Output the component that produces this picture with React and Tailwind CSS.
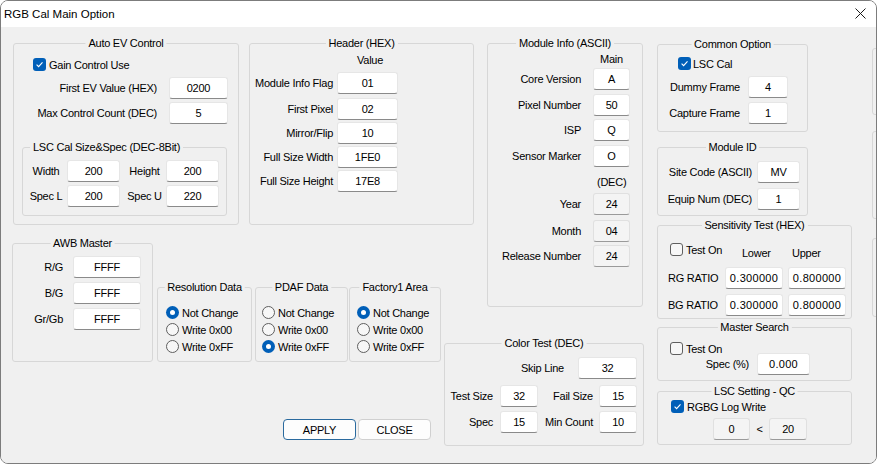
import React from "react"

const Check = ({ checked }) =>
  checked ? (
    <span className="flex h-[13px] w-[13px] shrink-0 items-center justify-center rounded-[3px] bg-[#005fb8]">
      <svg width="9" height="9" viewBox="0 0 9 9">
        <path d="M1.6 4.7 L3.6 6.7 L7.5 2.3" fill="none" stroke="#fff" strokeWidth="1.1" />
      </svg>
    </span>
  ) : (
    <span className="block h-[13px] w-[13px] shrink-0 rounded-[3px] border border-[#5f5f5f] bg-[#f7f7f7]" />
  )

const Radio = ({ checked }) =>
  checked ? (
    <span className="flex h-[13px] w-[13px] shrink-0 items-center justify-center rounded-full bg-[#005fb8]">
      <span className="block h-[5px] w-[5px] rounded-full bg-white" />
    </span>
  ) : (
    <span className="block h-[13px] w-[13px] shrink-0 rounded-full border border-[#5f5f5f] bg-[#f7f7f7]" />
  )

const Edit = ({ value, ro, className = "" }) => (
  <div
    className={`flex h-[22px] shrink-0 items-center justify-center rounded-[3px] border ${
      ro ? "border-[#e0e0e0] border-b-[#9a9a9a] bg-[#f4f4f4]" : "border-[#e6e6e6] border-b-[#8a8a8a] bg-white"
    } ${className}`}
  >
    {value}
  </div>
)

const Group = ({ title, left, className = "", children }) => (
  <div className={`relative shrink-0 rounded-[3px] border border-[#d7d7d7] ${className}`}>
    <span
      className={`absolute top-[-8px] whitespace-nowrap bg-[#f0f0f0] px-[3px] leading-[14px] ${
        left ? "left-[7px]" : "left-1/2 -translate-x-1/2"
      }`}
    >
      {title}
    </span>
    {children}
  </div>
)

const Row = ({ className = "", children }) => (
  <div className={`flex h-[22px] items-center ${className}`}>{children}</div>
)

const RadioGroup = ({ title, sel, className = "", pad }) => (
  <Group title={title} className={className}>
    <div className={`flex flex-col pt-[16px] ${pad}`}>
      {["Not Change", "Write 0x00", "Write 0xFF"].map((t, i) => (
        <div key={t} className="flex h-[17px] items-center gap-[3px]">
          <Radio checked={sel === i} />
          <span>{t}</span>
        </div>
      ))}
    </div>
  </Group>
)

export default function App() {
  const header = [
    ["Module Info Flag", "01", "mt-[5px]"],
    ["First Pixel", "02", "mt-[4px]"],
    ["Mirror/Flip", "10", "mt-[2px]"],
    ["Full Size Width", "1FE0", "mt-[2px]"],
    ["Full Size Height", "17E8", "mt-[2px]"],
  ]
  const ascii = [
    ["Core Version", "A", "mt-[2px]"],
    ["Pixel Number", "50", "mt-[4px]"],
    ["ISP", "Q", "mt-[3px]"],
    ["Sensor Marker", "O", "mt-[4px]"],
  ]
  const dec = [
    ["Year", "24", "mt-[4px]"],
    ["Month", "04", "mt-[5px]"],
    ["Release Number", "24", "mt-[3px]"],
  ]
  const awb = [
    ["R/G", "pt-0"],
    ["B/G", "mt-[4px]"],
    ["Gr/Gb", "mt-[4px]"],
  ]

  return (
    <div className="h-[464px] w-[877px] bg-white font-['Liberation_Sans',Arial,sans-serif] text-[11px] leading-[14px] tracking-[-0.25px] text-black">
      <div className="flex h-full w-full flex-col overflow-hidden rounded-[8px] border border-[#7c7c7c]">
        {/* title bar */}
        <div className="flex h-[26px] shrink-0 items-center bg-white pb-[1px] pl-[3px]">
          <span className="text-[11.5px] tracking-normal">RGB Cal Main Option</span>
          <svg className="ml-auto mr-[10px]" width="11" height="11" viewBox="0 0 11 11">
            <path d="M0.5 0.5 L10.5 10.5 M10.5 0.5 L0.5 10.5" stroke="#1a1a1a" strokeWidth="1" />
          </svg>
        </div>

        {/* body */}
        <div className="flex flex-1 items-start bg-[#f0f0f0] pl-[12px] pt-[16px]">
          {/* left area */}
          <div className="flex w-[431px] shrink-0 flex-col">
            <div className="flex items-start">
              <Group title="Auto EV Control" className="h-[182px] w-[226px]">
                <div className="mt-[14px] flex h-[13px] items-center gap-[3px] pl-[19px]">
                  <Check checked />
                  <span>Gain Control Use</span>
                </div>
                <Row className="mt-[6px]">
                  <span className="w-[143px] shrink-0 text-right">First EV Value (HEX)</span>
                  <Edit value="0200" className="ml-[12px] w-[59px]" />
                </Row>
                <Row className="mt-[3px]">
                  <span className="w-[143px] shrink-0 text-right">Max Control Count (DEC)</span>
                  <Edit value="5" className="ml-[12px] w-[59px]" />
                </Row>
                <Group title="LSC Cal Size&Spec (DEC-8Bit)" left className="ml-[8px] mt-[23px] h-[69px] w-[205px]">
                  <Row className="mt-[12px]">
                    <span className="ml-[2px] w-[42px] shrink-0 text-center">Width</span>
                    <Edit value="200" className="w-[53px]" />
                    <span className="ml-[3px] w-[43px] shrink-0 text-center">Height</span>
                    <Edit value="200" className="w-[53px]" />
                  </Row>
                  <Row className="mt-[3px]">
                    <span className="ml-[2px] w-[42px] shrink-0 text-center">Spec L</span>
                    <Edit value="200" className="w-[53px]" />
                    <span className="ml-[3px] w-[43px] shrink-0 text-center">Spec U</span>
                    <Edit value="220" className="w-[53px]" />
                  </Row>
                </Group>
              </Group>

              <Group title="Header (HEX)" className="ml-[10px] h-[182px] w-[225px]">
                <div className="pl-[107px] pt-[9px]">Value</div>
                {header.map(([l, v, m]) => (
                  <Row key={l} className={m}>
                    <span className="w-[83px] shrink-0 text-right">{l}</span>
                    <Edit value={v} className="ml-[4px] w-[61px]" />
                  </Row>
                ))}
              </Group>
            </div>

            <div className="mt-[18px] flex items-start">
              <Group title="AWB Master" className="-ml-[1px] h-[119px] w-[141px]">
                <div className="pt-[12px]">
                  {awb.map(([l, m]) => (
                    <Row key={l} className={m}>
                      <span className="w-[50px] shrink-0 text-right">{l}</span>
                      <Edit value="FFFF" className="ml-[10px] w-[68px]" />
                    </Row>
                  ))}
                </div>
              </Group>

              <div className="ml-[4px] flex flex-col">
                <div className="mt-[44px] flex items-start">
                  <RadioGroup title="Resolution Data" sel={0} pad="pl-[8px]" className="h-[75px] w-[95px]" />
                  <RadioGroup title="PDAF Data" sel={2} pad="pl-[6px]" className="ml-[3px] h-[75px] w-[93px]" />
                  <RadioGroup title="Factory1 Area" sel={0} pad="pl-[7px]" className="ml-[1px] h-[75px] w-[92px]" />
                </div>
                <div className="ml-[126px] mt-[57px] flex">
                  <button className="flex h-[21px] w-[73px] items-center justify-center rounded-[4px] border border-[#2a6a9e] bg-[#fdfdfd]">
                    APPLY
                  </button>
                  <button className="ml-[2px] flex h-[21px] w-[73px] items-center justify-center rounded-[4px] border border-[#d0d0d0] bg-[#fdfdfd]">
                    CLOSE
                  </button>
                </div>
              </div>
            </div>
          </div>

          {/* middle column */}
          <div className="flex w-[200px] shrink-0 flex-col">
            <Group title="Module Info (ASCII)" className="ml-[43px] h-[264px] w-[156px]">
              <div className="pl-[112px] pt-[8px]">Main</div>
              {ascii.map(([l, v, m]) => (
                <Row key={l} className={m}>
                  <span className="w-[93px] shrink-0 text-right">{l}</span>
                  <Edit value={v} className="ml-[12px] w-[37px]" />
                </Row>
              ))}
              <div className="mt-[8px] pl-[109px]">(DEC)</div>
              {dec.map(([l, v, m]) => (
                <Row key={l} className={m}>
                  <span className="w-[93px] shrink-0 text-right">{l}</span>
                  <Edit value={v} ro className="ml-[12px] w-[37px]" />
                </Row>
              ))}
            </Group>

            <Group title="Color Test (DEC)" className="mt-[36px] h-[103px] w-[200px]">
              <Row className="mt-[13px]">
                <span className="w-[119px] shrink-0 text-right">Skip Line</span>
                <Edit value="32" className="ml-[14px] w-[59px]" />
              </Row>
              <Row className="mt-[6px]">
                <span className="w-[48px] shrink-0 text-right">Test Size</span>
                <Edit value="32" className="ml-[7px] w-[38px]" />
                <span className="w-[55px] shrink-0 text-right">Fail Size</span>
                <Edit value="15" className="ml-[6px] w-[38px]" />
              </Row>
              <Row className="mt-[4px]">
                <span className="w-[48px] shrink-0 text-right">Spec</span>
                <Edit value="15" className="ml-[7px] w-[38px]" />
                <span className="w-[55px] shrink-0 text-right">Min Count</span>
                <Edit value="10" className="ml-[6px] w-[38px]" />
              </Row>
            </Group>
          </div>

          {/* right column */}
          <div className="ml-[13px] flex w-[195px] shrink-0 flex-col">
            <Group title="Common Option" className="mt-[1px] h-[88px] w-[151px]">
              <div className="mt-[12px] flex h-[13px] items-center gap-[2px] pl-[20px]">
                <Check checked />
                <span>LSC Cal</span>
              </div>
              <Row className="mt-[6px]">
                <span className="w-[82px] shrink-0 text-right">Dummy Frame</span>
                <Edit value="4" className="ml-[8px] w-[40px]" />
              </Row>
              <Row className="mt-[4px]">
                <span className="w-[82px] shrink-0 text-right">Capture Frame</span>
                <Edit value="1" className="ml-[8px] w-[40px]" />
              </Row>
            </Group>

            <Group title="Module ID" className="mt-[15px] h-[69px] w-[151px]">
              <Row className="mt-[13px]">
                <span className="w-[94px] shrink-0 text-right">Site Code (ASCII)</span>
                <Edit value="MV" className="ml-[5px] w-[43px]" />
              </Row>
              <Row className="mt-[5px]">
                <span className="w-[94px] shrink-0 text-right">Equip Num (DEC)</span>
                <Edit value="1" className="ml-[5px] w-[43px]" />
              </Row>
            </Group>

            <Group title="Sensitivity Test (HEX)" className="mt-[9px] h-[94px] w-[195px]">
              <div className="mt-[17px] flex items-start">
                <div className="flex h-[13px] w-[84px] shrink-0 items-center gap-[3px] pl-[12px]">
                  <Check />
                  <span>Test On</span>
                </div>
                <span className="mt-[3px] w-[50px] shrink-0">Lower</span>
                <span className="mt-[3px]">Upper</span>
              </div>
              <Row className="mt-[7px]">
                <span className="w-[67px] shrink-0 pl-[10px]">RG RATIO</span>
                <Edit value="0.300000" className="w-[58px] tracking-[0.3px]" />
                <Edit value="0.800000" className="ml-[5px] w-[58px] tracking-[0.3px]" />
              </Row>
              <Row className="mt-[5px]">
                <span className="w-[67px] shrink-0 pl-[10px]">BG RATIO</span>
                <Edit value="0.300000" className="w-[58px] tracking-[0.3px]" />
                <Edit value="0.800000" className="ml-[5px] w-[58px] tracking-[0.3px]" />
              </Row>
            </Group>

            <Group title="Master Search" className="mt-[8px] h-[54px] w-[195px]">
              <div className="mt-[14px] flex h-[13px] items-center gap-[3px] pl-[12px]">
                <Check />
                <span>Test On</span>
              </div>
              <Row className="-mt-[2px]">
                <span className="w-[91px] shrink-0 text-right">Spec (%)</span>
                <Edit value="0.000" className="ml-[8px] w-[53px] tracking-[0.3px]" />
              </Row>
            </Group>

            <Group title="LSC Setting - QC" className="mt-[10px] h-[54px] w-[195px]">
              <div className="mt-[8px] flex h-[13px] items-center gap-[3px] pl-[13px]">
                <Check checked />
                <span>RGBG Log Write</span>
              </div>
              <Row className="mt-[5px] pl-[55px]">
                <Edit value="0" ro className="w-[37px]" />
                <span className="w-[19px] shrink-0 text-center">&lt;</span>
                <Edit value="20" ro className="w-[38px]" />
              </Row>
            </Group>
          </div>

          {/* clipped column at the right edge */}
          <div className="ml-[20px] flex w-[40px] shrink-0 flex-col">
            <div className="mt-[5px] h-[67px] rounded-[3px] border border-[#d7d7d7]" />
            <div className="mt-[16px] h-[88px] rounded-[3px] border border-[#d7d7d7]" />
            <div className="mt-[19px] h-[79px] rounded-[3px] border border-[#d7d7d7]" />
          </div>
        </div>
      </div>
    </div>
  )
}
